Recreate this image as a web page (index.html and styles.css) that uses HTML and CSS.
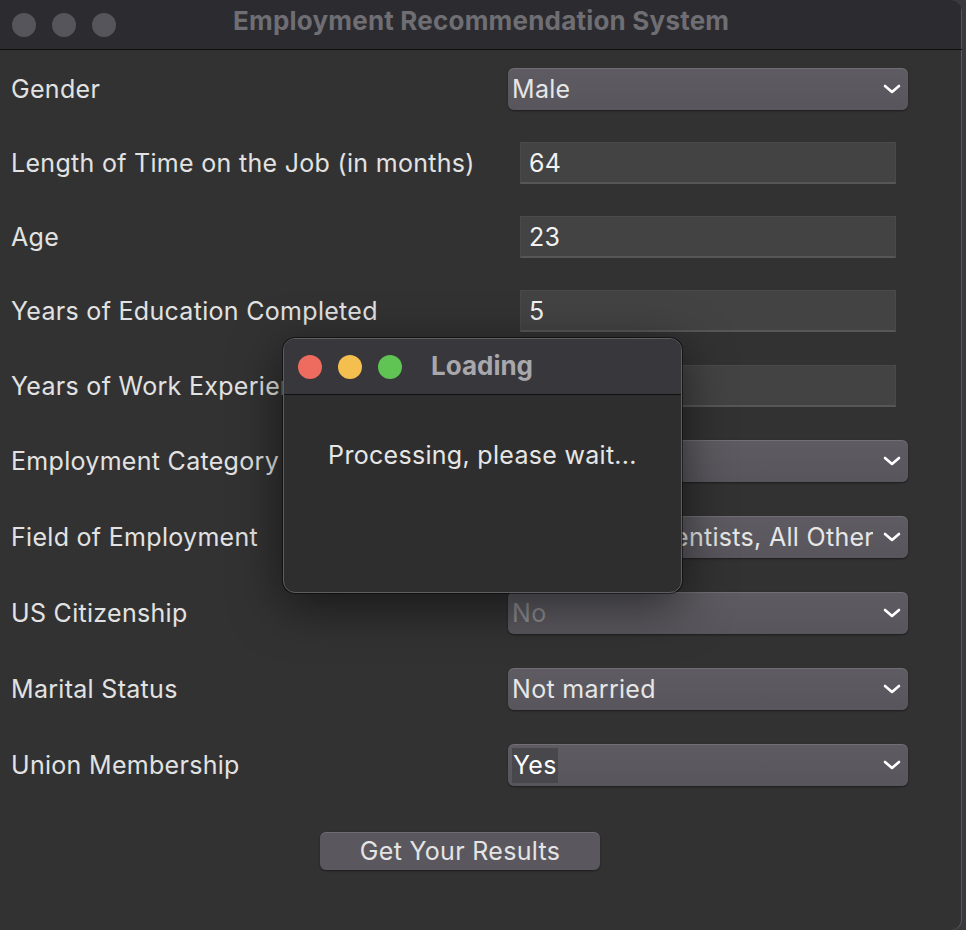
FILE: index.html
```html
<!DOCTYPE html>
<html>
<head>
<meta charset="utf-8">
<link rel="stylesheet" href="styles.css">
</head>
<body>
<div class="window">
  <div class="titlebar">
    <div class="lights">
      <span class="light gray"></span><span class="light gray"></span><span class="light gray"></span>
    </div>
    <div class="title">Employment Recommendation System</div>
  </div>
  <div class="form">
    <div class="row r74">
      <div class="label">Gender</div>
      <div class="combo"><span class="ctext">Male</span><svg class="chev" viewBox="0 0 18 10"><path d="M2 2 L9 8 L16 2"/></svg></div>
    </div>
    <div class="row r74">
      <div class="label">Length of Time on the Job (in months)</div>
      <div class="field">64</div>
    </div>
    <div class="row r74">
      <div class="label">Age</div>
      <div class="field">23</div>
    </div>
    <div class="row r74">
      <div class="label">Years of Education Completed</div>
      <div class="field">5</div>
    </div>
    <div class="row r75">
      <div class="label">Years of Work Experience</div>
      <div class="field">3</div>
    </div>
    <div class="row r76">
      <div class="label">Employment Category</div>
      <div class="combo"><span class="ctext">Full-time</span><svg class="chev" viewBox="0 0 18 10"><path d="M2 2 L9 8 L16 2"/></svg></div>
    </div>
    <div class="row r76">
      <div class="label">Field of Employment</div>
      <div class="combo"><span class="ctext">Biological Scientists, All Other</span><svg class="chev" viewBox="0 0 18 10"><path d="M2 2 L9 8 L16 2"/></svg></div>
    </div>
    <div class="row r76">
      <div class="label">US Citizenship</div>
      <div class="combo"><span class="ctext disabled">No</span><svg class="chev" viewBox="0 0 18 10"><path d="M2 2 L9 8 L16 2"/></svg></div>
    </div>
    <div class="row r76">
      <div class="label">Marital Status</div>
      <div class="combo"><span class="ctext">Not married</span><svg class="chev" viewBox="0 0 18 10"><path d="M2 2 L9 8 L16 2"/></svg></div>
    </div>
    <div class="row r76">
      <div class="label">Union Membership</div>
      <div class="combo"><span class="ctext"><span class="sel">Yes</span></span><svg class="chev" viewBox="0 0 18 10"><path d="M2 2 L9 8 L16 2"/></svg></div>
    </div>
    <div class="actions">
      <button class="btn">Get Your Results</button>
    </div>
  </div>

  <div class="dialog">
    <div class="dtitlebar">
      <div class="lights dlights">
        <span class="light red"></span><span class="light yellow"></span><span class="light green"></span>
      </div>
      <div class="dtitle">Loading</div>
    </div>
    <div class="dbody">Processing, please wait...</div>
  </div>
</div>
</body>
</html>
```
FILE: styles.css
```css
html, body {
  margin: 0;
  padding: 0;
}
body {
  width: 966px;
  height: 930px;
  background: #3a3a3e;
  overflow: hidden;
  font-family: "Inter", "Liberation Sans", sans-serif;
}
.window {
  position: relative;
  width: 962px;
  height: 930px;
  background: #323232;
  border-top-right-radius: 12px;
  border-bottom-right-radius: 10px;
  box-shadow: inset -1px 0 0 #5a5a5e;
  overflow: hidden;
}
.titlebar {
  height: 49px;
  background: #2c2b30;
  border-bottom: 1px solid #0e0e0e;
  display: flex;
  align-items: center;
  position: relative;
  box-shadow: inset -1px 0 0 #55555a;
}
.lights {
  display: flex;
  gap: 16px;
  padding-left: 12px;
}
.light {
  width: 24px;
  height: 24px;
  border-radius: 50%;
  display: block;
}
.light.gray { background: #56555b; }
.light.red { background: #ee6b5f; }
.light.yellow { background: #f5bf4f; }
.light.green { background: #5fc454; }
.title {
  position: absolute;
  left: 233px;
  top: 5px;
  font-weight: 700;
  font-size: 26px;
  line-height: 32px;
  color: #6f6e73;
  letter-spacing: 0.2px;
}
.form {
  padding-top: 2px;
}
.row {
  display: flex;
  align-items: center;
  justify-content: space-between;
  padding-left: 11px;
  padding-right: 54px;
}
.r74 { height: 74px; }
.r75 { height: 75px; }
.r76 { height: 76px; }
.label {
  font-size: 25px;
  letter-spacing: 0.3px;
  color: #e2e2e2;
  white-space: nowrap;
}
.combo {
  width: 400px;
  height: 42px;
  box-sizing: border-box;
  border-radius: 6px;
  background: linear-gradient(#5e5c62, #58565c);
  box-shadow: inset 0 1px 0 rgba(255,255,255,0.12), 0 1px 2px rgba(0,0,0,0.45);
  display: flex;
  align-items: center;
  padding-left: 4px;
  padding-right: 7px;
}
.ctext {
  flex: 1;
  overflow: hidden;
  white-space: nowrap;
  font-size: 25px;
  letter-spacing: 0.3px;
  color: #e6e6e6;
  margin-right: 10px;
}
.ctext.disabled { color: #8e8d91; }
.sel {
  background: #48474b;
  color: #ffffff;
  display: inline-block;
  padding: 2px 1px 3px 1px;
}
.chev {
  width: 18px;
  height: 10px;
  fill: none;
  stroke: #ffffff;
  stroke-width: 2.6;
  stroke-linecap: round;
  stroke-linejoin: round;
  flex: none;
}
.field {
  width: 376px;
  height: 42px;
  box-sizing: border-box;
  margin-right: 12px;
  background: #434343;
  border: 1px solid #4a4a4a;
  border-bottom: 2px solid #575757;
  font-size: 25px;
  letter-spacing: 0.3px;
  color: #f2f2f2;
  display: flex;
  align-items: center;
  padding-left: 8px;
}
.actions {
  padding-top: 29px;
  padding-left: 320px;
}
.btn {
  width: 280px;
  height: 38px;
  border: none;
  border-radius: 6px;
  background: #5a585e;
  box-shadow: inset 0 1px 0 rgba(255,255,255,0.12), 0 1px 2px rgba(0,0,0,0.45);
  color: #e4e4e4;
  font-family: "Inter", "Liberation Sans", sans-serif;
  font-size: 25px;
  letter-spacing: 0.3px;
  padding: 0;
}
.dialog {
  position: absolute;
  left: 283px;
  top: 338px;
  width: 399px;
  height: 255px;
  box-sizing: border-box;
  border: 1px solid #5e5e62;
  border-radius: 12px;
  background: #2e2e2e;
  overflow: hidden;
  box-shadow: 0 12px 50px rgba(0,0,0,0.55), 0 0 0 1px rgba(0,0,0,0.5);
}
.dtitlebar {
  height: 55px;
  background: #38373c;
  border-bottom: 1px solid #101010;
  display: flex;
  align-items: center;
  position: relative;
}
.dlights {
  padding-left: 14px;
}
.dtitle {
  position: absolute;
  left: 147px;
  top: 11px;
  font-weight: 700;
  font-size: 26px;
  line-height: 32px;
  color: #a8a7ac;
}
.dbody {
  text-align: center;
  font-size: 25px;
  letter-spacing: 0.3px;
  color: #e6e6e6;
  padding-top: 45px;
}
```
